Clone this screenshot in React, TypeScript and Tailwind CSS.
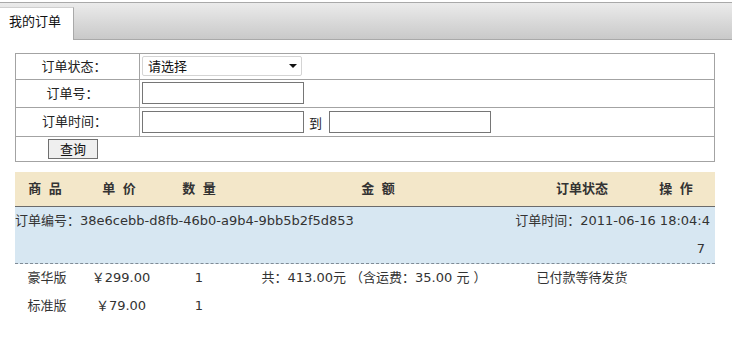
import { useState } from "react";

const orderItems = [
  { name: "豪华版", price: "￥299.00", qty: "1" },
  { name: "标准版", price: "￥79.00", qty: "1" },
];

export default function App() {
  const [status, setStatus] = useState("");

  return (
    <div className="w-[732px] h-[342px] bg-white text-[13px] text-[#333] font-['DejaVu_Sans','Noto_Sans_CJK_SC',sans-serif]">
      {/* Tab bar */}
      <div className="mt-[2px] h-[38px] flex items-end border-t border-b border-[#a9a9a9] bg-gradient-to-b from-[#ebebeb] to-[#c9c9c9]">
        <div className="-mb-px h-[33px] w-[74px] flex items-center pb-[4px] pl-[9px] bg-white border-t border-r border-t-[#cfcfcf] border-r-[#a9a9a9] text-[#111]">
          我的订单
        </div>
      </div>

      {/* Search form */}
      <div className="ml-[15px] mt-[13px] w-[700px] border border-[#a3a3a3] text-[#222]">
        <div className="grid grid-cols-[124px_1fr] h-[26px] border-b border-[#a3a3a3]">
          <div className="flex items-center justify-center pr-[7px] border-r border-[#a3a3a3]">订单状态：</div>
          <div className="pl-[2px] pt-[2px]">
            <div className="relative w-[160px] h-[20px]">
              <select
                value={status}
                onChange={(e) => setStatus(e.target.value)}
                className="appearance-none w-full h-full pl-[5px] border border-[#d4d4d4] rounded-[2px] bg-white text-[13px] text-[#111] outline-none"
              >
                <option value="">请选择</option>
                <option value="paid">已付款等待发货</option>
                <option value="done">已完成</option>
              </select>
              <svg className="absolute right-[5px] top-[8px] pointer-events-none" width="8" height="4" viewBox="0 0 8 4">
                <polygon points="0,0 8,0 4,4" fill="#111" />
              </svg>
            </div>
          </div>
        </div>
        <div className="grid grid-cols-[124px_1fr] h-[28px] border-b border-[#a3a3a3]">
          <div className="flex items-center justify-center pr-[10px] border-r border-[#a3a3a3]">订单号：</div>
          <div className="pl-[2px] pt-[2px]">
            <input className="w-[162px] h-[22px] border border-[#767676] bg-white outline-none px-[2px]" />
          </div>
        </div>
        <div className="grid grid-cols-[124px_1fr] h-[29px] border-b border-[#a3a3a3]">
          <div className="flex items-center justify-center pr-[6px] border-r border-[#a3a3a3]">订单时间：</div>
          <div className="flex items-start pl-[2px] pt-[3px]">
            <input className="w-[162px] h-[22px] border border-[#767676] bg-white outline-none px-[2px]" />
            <span className="ml-[5px] mr-[7px] leading-[22px] pt-[2px]">到</span>
            <input className="w-[162px] h-[22px] border border-[#767676] bg-white outline-none px-[2px]" />
          </div>
        </div>
        <div className="h-[24px] pl-[32px] pt-[2px]">
          <button className="w-[50px] h-[20px] border border-[#6f6f6f] bg-[#efefef] text-[13px] text-[#111] leading-none">
            查询
          </button>
        </div>
      </div>

      {/* Order list */}
      <div className="ml-[15px] mt-[10px] w-[700px]">
        <div className="flex items-center h-[35px] border-b border-[#6b6b6b] bg-[#f3e7c9] font-bold text-[#333] [word-spacing:3px]">
          <div className="w-[60px] text-center">商 品</div>
          <div className="w-[88px] text-center">单 价</div>
          <div className="w-[72px] text-center">数 量</div>
          <div className="w-[286px] text-center">金 额</div>
          <div className="w-[122px] text-center">订单状态</div>
          <div className="w-[66px] text-center">操 作</div>
        </div>

        <div className="flex justify-between h-[57px] leading-[28px] bg-[#d7e7f2] border-b border-dashed border-[#7f8b96]">
          <div>订单编号：38e6cebb-d8fb-46b0-a9b4-9bb5b2f5d853</div>
          <div className="text-right pr-[5px]">
            <div>订单时间：2011-06-16 18:04:4</div>
            <div className="pr-[5px]">7</div>
          </div>
        </div>

        {orderItems.map((item, i) => (
          <div key={item.name} className="flex items-center h-[28px]">
            <div className="w-[64px] text-center">{item.name}</div>
            <div className="w-[84px] text-center">{item.price}</div>
            <div className="w-[72px] text-center">{item.qty}</div>
            <div className="w-[278px] text-center">
              {i === 0 ? "共：413.00元 （含运费：35.00 元 ）" : ""}
            </div>
            <div className="w-[138px] text-center">{i === 0 ? "已付款等待发货" : ""}</div>
            <div className="w-[52px]" />
          </div>
        ))}
      </div>
    </div>
  );
}
